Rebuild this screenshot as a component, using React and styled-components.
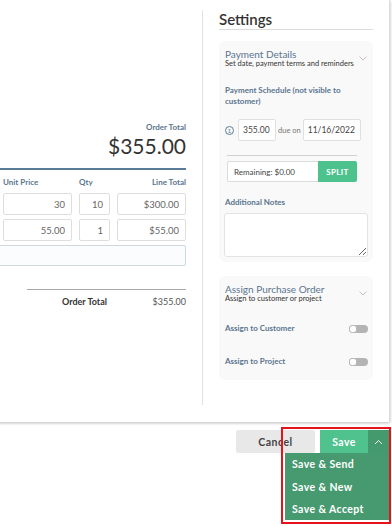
import React from 'react';
import styled, { createGlobalStyle } from 'styled-components';

const GlobalStyle = createGlobalStyle`
    html, body {
        margin: 0;
        padding: 0;
        background: #fff;
    }
    * {
        box-sizing: border-box;
    }
`;

// layout
const Frame = styled.div`
    position: relative;
    width: 392px;
    height: 526px;
    overflow: hidden;
    background: #fff;
    font-family: Lato, "Open Sans", sans-serif;
    color: #333;
`;

const Modal = styled.div`
    display: flex;
    width: 530px;
    height: 422px;
    margin-left: -140px;
    background: #fff;
    border-right: 1px solid #dcdcdc;
    box-shadow: 0 1px 3px rgba(0, 0, 0, 0.28);
`;

const LeftCol = styled.div`
    flex: 1;
    padding: 122px 16px 0 20px;
    display: flex;
    flex-direction: column;
`;

const RightCol = styled.div`
    width: 187px;
    margin: 10px 0 17px;
    padding: 0 16px;
    border-left: 1px solid #e2e2e2;
`;

// left side
const TotalBlock = styled.div`
    text-align: right;
`;

const SmallLabel = styled.div`
    font-size: 8px;
    line-height: 10px;
    font-weight: 700;
    color: #5a7590;
    text-align: ${p => p.align || 'left'};
`;

const BigAmount = styled.div`
    font-size: 21px;
    line-height: 24px;
    color: #333;
    margin-top: 2px;
`;

const Rule = styled.div`
    height: 2px;
    background: #5b7c99;
    margin-top: 10px;
`;

const Grid = styled.div`
    display: grid;
    grid-template-columns: 1fr 69px 31px 69px;
    column-gap: 7px;
    row-gap: 4px;
    margin-top: 7px;
`;

const HeaderCell = styled(SmallLabel)`
    height: 10px;
    margin-bottom: 2px;
`;

const Cell = styled.input`
    height: 22px;
    width: 100%;
    border: 1px solid #dedede;
    border-radius: 2px;
    background: #fff;
    font-family: inherit;
    font-size: 9.5px;
    color: #666;
    text-align: right;
    padding: 0 6px;
    outline: none;
`;

const WideCell = styled.input`
    grid-column: 1 / -1;
    height: 21px;
    border: 1px solid #cdd8df;
    border-radius: 2px;
    background: #fafcfd;
    outline: none;
`;

const SumBlock = styled.div`
    align-self: flex-end;
    width: 159px;
    margin-top: 23px;
    border-top: 1.5px solid #a9a9a9;
    display: flex;
    padding-top: 6px;
    font-size: 9px;
`;

const SumLabel = styled.div`
    width: 80px;
    text-align: right;
    font-weight: 700;
    color: #333;
`;

const SumValue = styled.div`
    flex: 1;
    text-align: right;
    color: #555;
`;

// right side
const Title = styled.h2`
    margin: 0;
    font-size: 15px;
    line-height: 18px;
    font-weight: 600;
    color: #333;
    padding-bottom: 1px;
    border-bottom: 1px solid #dcdcdc;
`;

const Card = styled.div`
    background: #f9f9f9;
    border-radius: 6px;
    margin-top: ${p => p.gap || 11}px;
    padding: 8px 5px ${p => p.bottom || 5}px;
`;

const CardHead = styled.div`
    position: relative;
`;

const CardTitle = styled.div`
    font-size: 10px;
    line-height: 10px;
    color: #5a7590;
    padding-left: 1px;
`;

const CardSub = styled.div`
    font-size: 7.5px;
    line-height: 9px;
    color: #333;
    padding-left: 1px;
`;

const Chevron = styled.svg`
    position: absolute;
    right: 1px;
    top: 7px;
`;

const SectionLabel = styled.div`
    font-size: 8px;
    line-height: 11px;
    font-weight: 700;
    color: #5a7590;
    margin-top: ${p => p.gap}px;
    padding-left: 1px;
    max-width: ${p => p.max || 'none'};
`;

const ScheduleRow = styled.div`
    display: flex;
    align-items: center;
    margin-top: 12px;
`;

const StepDot = styled.span`
    width: 9px;
    height: 9px;
    border: 1px solid #5b7c99;
    border-radius: 50%;
    color: #5b7c99;
    font-size: 6.5px;
    line-height: 7px;
    text-align: center;
    margin: 0 4px 0 1px;
`;

const SmallInput = styled.input`
    width: ${p => p.w}px;
    height: 22px;
    border: 1px solid #e0e0e0;
    border-radius: 2px;
    background: #fff;
    font-family: inherit;
    font-size: 8.5px;
    color: #444;
    padding: 0 4px;
    outline: none;
`;

const DueOn = styled.span`
    font-size: 7.5px;
    color: #777;
    margin: 0 2px;
`;

const SplitBlock = styled.div`
    width: 130px;
    margin: 14px 0 0 3px;
    border-top: 1px solid #d0d0d0;
    padding-top: 5px;
`;

const SplitRow = styled.div`
    display: flex;
    height: 21px;
`;

const Remaining = styled.div`
    flex: 1;
    border: 1px solid #dcdcdc;
    border-right: none;
    border-radius: 2px 0 0 2px;
    background: #fff;
    font-size: 8px;
    color: #444;
    display: flex;
    align-items: center;
    padding-left: 6px;
`;

const SplitButton = styled.button`
    width: 39px;
    border: none;
    border-radius: 0 2px 2px 0;
    background: #4ec28d;
    color: #fff;
    font-family: inherit;
    font-weight: 700;
    font-size: 8px;
    letter-spacing: 0.4px;
    padding: 0;
`;

const Notes = styled.textarea`
    display: block;
    width: 100%;
    height: 44px;
    margin-top: 5px;
    border: 1px solid #e3e3e3;
    border-radius: 3px;
    background: #fff;
    outline: none;
`;

const ToggleRow = styled.div`
    display: flex;
    align-items: center;
    justify-content: space-between;
    margin-top: ${p => p.gap}px;
`;

const Toggle = styled.span`
    position: relative;
    width: 19px;
    height: 8px;
    border-radius: 4px;
    background: #b4b4b4;

    &::after {
        content: '';
        position: absolute;
        left: 0;
        top: 0;
        width: 8px;
        height: 8px;
        border-radius: 50%;
        background: #fff;
        box-shadow: 0 0 0 0.8px #aaa inset;
    }
`;

// footer
const Footer = styled.div`
    display: flex;
    justify-content: flex-end;
    gap: 5px;
    margin-top: 8px;
    padding-right: 3px;
`;

const CancelButton = styled.button`
    width: 79px;
    height: 23px;
    border: none;
    border-radius: 2px;
    background: #e8e8e8;
    color: #444;
    font-family: inherit;
    font-weight: 700;
    font-size: 10.5px;
    letter-spacing: 0.5px;
`;

const SaveGroup = styled.div`
    position: relative;
    display: flex;
`;

const SaveButton = styled.button`
    width: 48px;
    height: 23px;
    border: none;
    background: #50c28e;
    color: #fff;
    font-family: inherit;
    font-weight: 700;
    font-size: 10.5px;
    letter-spacing: 0.4px;
`;

const ArrowButton = styled.button`
    width: 21px;
    height: 23px;
    border: none;
    background: #449a6d;
    display: flex;
    align-items: center;
    justify-content: center;
    padding: 0;
`;

const Menu = styled.div`
    position: absolute;
    top: 23px;
    right: 0;
    width: 104px;
    height: 67px;
    background: #479a6f;
`;

const MenuItem = styled.div`
    height: 22.5px;
    line-height: 22px;
    padding-left: 7px;
    color: #fff;
    font-weight: 700;
    font-size: 10.5px;
    letter-spacing: 0.4px;
`;

const Highlight = styled.div`
    position: absolute;
    left: 281px;
    top: 427px;
    width: 110px;
    height: 97px;
    border: 2px solid #e5141c;
    pointer-events: none;
`;

const Down = () => (
    <Chevron width="8" height="5" viewBox="0 0 8 5">
        <path d="M0.5 0.5 L4 4 L7.5 0.5" fill="none" stroke="#bbb" strokeWidth="0.9" />
    </Chevron>
)

const App = () => {
    return (
        <Frame>
            <GlobalStyle />
            <Modal>
                <LeftCol>
                    <TotalBlock>
                        <SmallLabel align="right">Order Total</SmallLabel>
                        <BigAmount>$355.00</BigAmount>
                    </TotalBlock>
                    <Rule />
                    <Grid>
                        <HeaderCell />
                        <HeaderCell>Unit Price</HeaderCell>
                        <HeaderCell>Qty</HeaderCell>
                        <HeaderCell align="right">Line Total</HeaderCell>

                        <Cell readOnly defaultValue="" />
                        <Cell readOnly defaultValue="30" />
                        <Cell readOnly defaultValue="10" />
                        <Cell readOnly defaultValue="$300.00" />

                        <Cell readOnly defaultValue="" />
                        <Cell readOnly defaultValue="55.00" />
                        <Cell readOnly defaultValue="1" />
                        <Cell readOnly defaultValue="$55.00" />

                        <WideCell readOnly />
                    </Grid>
                    <SumBlock>
                        <SumLabel>Order Total</SumLabel>
                        <SumValue>$355.00</SumValue>
                    </SumBlock>
                </LeftCol>

                <RightCol>
                    <Title>Settings</Title>

                    <Card>
                        <CardHead>
                            <CardTitle>Payment Details</CardTitle>
                            <CardSub>Set date, payment terms and reminders</CardSub>
                            <Down />
                        </CardHead>

                        <SectionLabel gap={17} max="130px">Payment Schedule (not visible to customer)</SectionLabel>

                        <ScheduleRow>
                            <StepDot>1</StepDot>
                            <SmallInput w={38} readOnly defaultValue="355.00" />
                            <DueOn>due on</DueOn>
                            <SmallInput w={58} readOnly defaultValue="11/16/2022" />
                        </ScheduleRow>

                        <SplitBlock>
                            <SplitRow>
                                <Remaining>Remaining: $0.00</Remaining>
                                <SplitButton>SPLIT</SplitButton>
                            </SplitRow>
                        </SplitBlock>

                        <SectionLabel gap={15}>Additional Notes</SectionLabel>
                        <Notes />
                    </Card>

                    <Card gap={14} bottom={13}>
                        <CardHead>
                            <CardTitle>Assign Purchase Order</CardTitle>
                            <CardSub>Assign to customer or project</CardSub>
                            <Down />
                        </CardHead>
                        <ToggleRow gap={20}>
                            <SectionLabel gap={0}>Assign to Customer</SectionLabel>
                            <Toggle />
                        </ToggleRow>
                        <ToggleRow gap={22}>
                            <SectionLabel gap={0}>Assign to Project</SectionLabel>
                            <Toggle />
                        </ToggleRow>
                    </Card>
                </RightCol>
            </Modal>

            <Footer>
                <CancelButton>Cancel</CancelButton>
                <SaveGroup>
                    <SaveButton>Save</SaveButton>
                    <ArrowButton>
                        <svg width="9" height="6" viewBox="0 0 9 6">
                            <path d="M1 5 L4.5 1.5 L8 5" fill="none" stroke="#fff" strokeWidth="1" />
                        </svg>
                    </ArrowButton>
                    <Menu>
                        <MenuItem>Save &amp; Send</MenuItem>
                        <MenuItem>Save &amp; New</MenuItem>
                        <MenuItem>Save &amp; Accept</MenuItem>
                    </Menu>
                </SaveGroup>
            </Footer>

            <Highlight />
        </Frame>
    )
}

export default App
